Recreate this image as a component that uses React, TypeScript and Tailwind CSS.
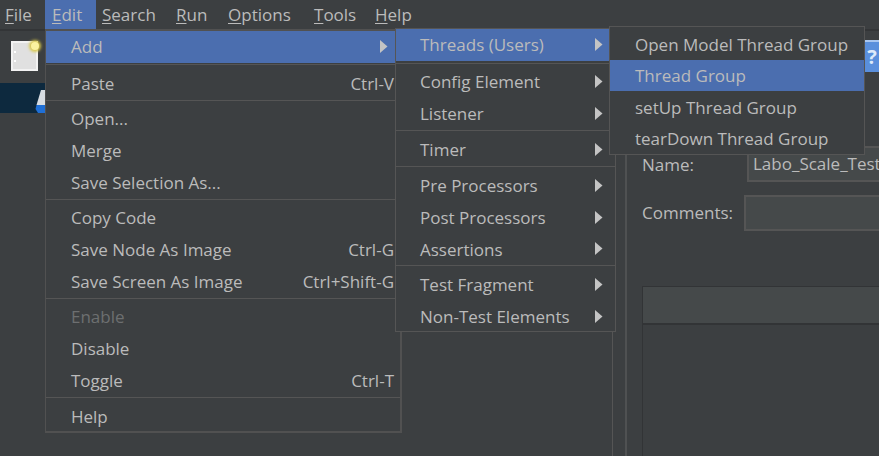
const topMenus = [
  { label: "File", key: "F", rest: "ile", className: "w-[45px] pl-[5px]" },
  { label: "Edit", key: "E", rest: "dit", className: "w-[51px] pl-[7px] bg-[#4b6eaf]" },
  { label: "Search", key: "S", rest: "earch", className: "w-[74px] pl-[6px]" },
  { label: "Run", key: "R", rest: "un", className: "w-[52px] pl-[6px]" },
  { label: "Options", key: "O", rest: "ptions", className: "w-[85px] pl-[6px]" },
  { label: "Tools", key: "T", rest: "ools", className: "w-[62px] pl-[7px]" },
  { label: "Help", key: "H", rest: "elp", className: "w-[50px] pl-[6px]" },
];

type Row = { label?: string; hint?: string; arrow?: boolean; active?: boolean; disabled?: boolean; sep?: string };

const editRows: Row[] = [
  { label: "Add", arrow: true, active: true },
  { sep: "mt-[1px] mb-[3px]" },
  { label: "Paste", hint: "Ctrl-V" },
  { sep: "mb-[2px]" },
  { label: "Open..." },
  { label: "Merge" },
  { label: "Save Selection As..." },
  { sep: "mb-[2px]" },
  { label: "Copy Code" },
  { label: "Save Node As Image", hint: "Ctrl-G" },
  { label: "Save Screen As Image", hint: "Ctrl+Shift-G" },
  { sep: "mb-[2px]" },
  { label: "Enable", disabled: true },
  { label: "Disable" },
  { label: "Toggle", hint: "Ctrl-T" },
  { sep: "mb-[3px]" },
  { label: "Help" },
];

const addRows: Row[] = [
  { label: "Threads (Users)", arrow: true, active: true },
  { sep: "mt-[2px] mb-[2.5px]" },
  { label: "Config Element", arrow: true },
  { label: "Listener", arrow: true },
  { sep: "mt-[0.5px] mb-[3px]" },
  { label: "Timer", arrow: true },
  { sep: "mt-[0.5px] mb-[3px]" },
  { label: "Pre Processors", arrow: true },
  { label: "Post Processors", arrow: true },
  { label: "Assertions", arrow: true },
  { sep: "mb-[3px]" },
  { label: "Test Fragment", arrow: true },
  { label: "Non-Test Elements", arrow: true },
];

const threadRows: Row[] = [
  { label: "Open Model Thread Group" },
  { label: "Thread Group", active: true },
  { label: "setUp Thread Group" },
  { label: "tearDown Thread Group" },
];

function Arrow() {
  return (
    <svg width="8" height="13" viewBox="0 0 8 13" className="absolute right-[12px] top-[9px]">
      <path d="M0 0 L7.5 6.5 L0 13 Z" fill="#c4c4c4" />
    </svg>
  );
}

function MenuRow({ row, box }: { row: Row; box: string }) {
  return (
    <div
      className={`relative flex items-center justify-between whitespace-nowrap ${box} ${
        row.active ? "bg-[#4b6eaf]" : ""
      } ${row.disabled ? "text-[#6d6f70]" : "text-[#bbbbbb]"}`}
    >
      <span>{row.label}</span>
      {row.hint && <span className="mr-[6px]">{row.hint}</span>}
      {row.arrow && <Arrow />}
    </div>
  );
}

export default function App() {
  return (
    <div className="relative flex h-[456px] w-[879px] flex-col overflow-hidden bg-[#3c3f41] font-['Open_Sans','Noto_Sans',sans-serif] text-[17px] text-[#bbbbbb]">
      {/* menu bar */}
      <div className="flex h-[29px] shrink-0 items-stretch">
        {topMenus.map((m) => (
          <div key={m.label} className={`flex items-center ${m.className}`}>
            <span className="underline decoration-1 underline-offset-2 [text-decoration-skip-ink:none]">{m.key}</span>
            <span>{m.rest}</span>
          </div>
        ))}
      </div>
      <div className="h-[2px] shrink-0 bg-[#333537]" />

      {/* toolbar */}
      <div className="flex h-[50px] shrink-0 items-center pl-[11px]">
        <div className="relative h-[30px] w-[27px] border-2 border-[#f2f2f2] bg-[#e0e0e0]">
          <div className="absolute left-[1px] top-[8px] h-[2px] w-[2px] bg-white" />
          <div className="absolute left-[1px] top-[17px] h-[2px] w-[2px] bg-white" />
          <div className="absolute -right-[3px] -top-[1px] h-[8px] w-[8px] rounded-full bg-[#fbf3a0] shadow-[0_0_3px_2px_#d8c84a]" />
        </div>
        <div className="ml-auto flex h-[32px] w-[14px] items-center justify-center border-t-2 border-[#a9c6f0] bg-[#5a8fdc] text-[20px] font-bold text-[#dce9fa]">
          ?
        </div>
      </div>

      {/* workspace */}
      <div className="flex min-h-0 flex-1">
        {/* tree */}
        <div className="w-[613px] shrink-0 border-r border-[#555555] pt-[2px]">
          <div className="flex h-[30px] w-full items-end bg-[#0d293e] pl-[35px]">
            <svg width="10" height="23" viewBox="0 0 10 23">
              <path d="M6 0 L10 0 L10 15 L1.5 15 Z" fill="#d8dde2" />
              <path d="M1.5 15 L10 15 L10 23 L3 23 L0.5 19 Z" fill="#1f6fd6" />
            </svg>
          </div>
        </div>

        {/* details panel */}
        <div className="ml-[12px] flex min-w-0 flex-1 flex-col border-l-2 border-[#4f5152] pl-[15px] pt-[65px]">
          <div className="flex h-[36px] items-center">
            <span className="w-[105px] shrink-0 pt-[2px]">Name:</span>
            <div className="flex h-[36px] min-w-0 flex-1 items-center overflow-hidden whitespace-nowrap border-2 border-r-0 border-[#555555] bg-[#45494a] pl-[4px]">
              Labo_Scale_Test
            </div>
          </div>
          <div className="mt-[13px] flex h-[36px] items-center">
            <span className="w-[102px] shrink-0">Comments:</span>
            <div className="h-[36px] flex-1 border-2 border-r-0 border-[#555555] bg-[#45494a]" />
          </div>
          <div className="mt-[55px] flex-1 border-l border-t border-[#323436]">
            <div className="h-[38px] border-b-2 border-[#323436] bg-[#45494a]" />
          </div>
        </div>
      </div>

      {/* open menus */}
      <div className="absolute left-[45px] top-[29px] h-[404px] w-[357px] border-y-2 border-l border-r-2 border-[#515151] bg-[#3c3f41]">
        {editRows.map((row, i) =>
          row.sep ? (
            <div key={i} className={`h-px bg-[#555555] ${row.sep}`} />
          ) : (
            <MenuRow key={i} row={row} box="h-[32px] pl-[25px]" />
          ),
        )}
      </div>
      <div className="absolute left-[395px] top-[28px] h-[304px] w-[221px] border border-[#555555] bg-[#3c3f41]">
        {addRows.map((row, i) =>
          row.sep ? (
            <div key={i} className={`h-px bg-[#555555] ${row.sep}`} />
          ) : (
            <MenuRow key={i} row={row} box="h-[31.67px] pl-[24px]" />
          ),
        )}
      </div>
      <div className="absolute left-[609px] top-[26px] h-[129px] w-[256px] border border-[#555555] bg-[#3c3f41] pt-[1px]">
        {threadRows.map((row, i) => (
          <MenuRow key={i} row={row} box="h-[31.5px] pl-[25px] pt-[1px]" />
        ))}
      </div>
    </div>
  );
}
